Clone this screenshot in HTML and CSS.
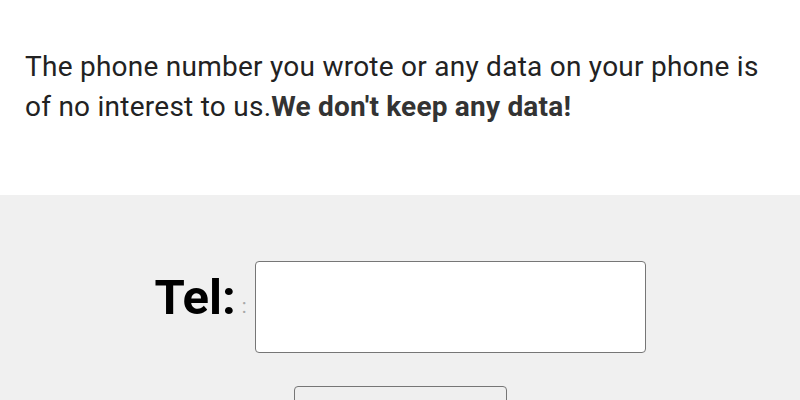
FILE: index.html
```html
<!DOCTYPE html>
<html lang="en">
<head>
<meta charset="utf-8">
<title>Tel</title>
<link rel="stylesheet" href="styles.css">
</head>
<body>
<div class="intro">
  <p class="lead">Why?</p>
  <p class="text">The phone number you wrote or any data on your phone is of no interest to us.<strong>We don't keep any data!</strong></p>
</div>
<form class="panel">
  <div class="row">
    <label class="label" for="tel">Tel:</label><span class="dots">:</span>
    <input class="field" id="tel" type="tel">
  </div>
  <div class="actions">
    <button class="btn" type="button"></button>
  </div>
</form>
</body>
</html>
```
FILE: styles.css
```css
html, body {
  margin: 0;
  padding: 0;
  background: #fff;
  font-family: Roboto, "Liberation Sans", sans-serif;
}
.intro {
  padding: 0 25px;
  margin-top: -36px;
  height: 231px;
  box-sizing: border-box;
}
.lead {
  margin: 0;
  font-size: 28px;
  line-height: 40px;
  color: #222;
}
.text {
  margin: 43px 0 0;
  font-size: 28px;
  line-height: 40px;
  letter-spacing: 0.25px;
  color: #222;
}
.text strong {
  color: #333;
  font-weight: 700;
  letter-spacing: 0.2px;
}
.panel {
  background: #f0f0f0;
  padding-top: 66px;
  min-height: 300px;
}
.row {
  display: flex;
  align-items: center;
  justify-content: center;
}
.label {
  font-size: 49px;
  font-weight: 700;
  color: #000;
  margin-bottom: 20px;
}
.dots {
  color: #a8a8a8;
  font-size: 20px;
  margin: 0 8px 3px 6px;
}
.field {
  width: 391px;
  height: 92px;
  box-sizing: border-box;
  border: 1px solid #767676;
  border-radius: 4px;
  background: #fff;
  margin: 0;
}
.actions {
  display: flex;
  justify-content: center;
  margin-top: 33px;
}
.btn {
  width: 213px;
  height: 60px;
  border: 1px solid #767676;
  border-radius: 4px;
  background: #efefef;
}
```
